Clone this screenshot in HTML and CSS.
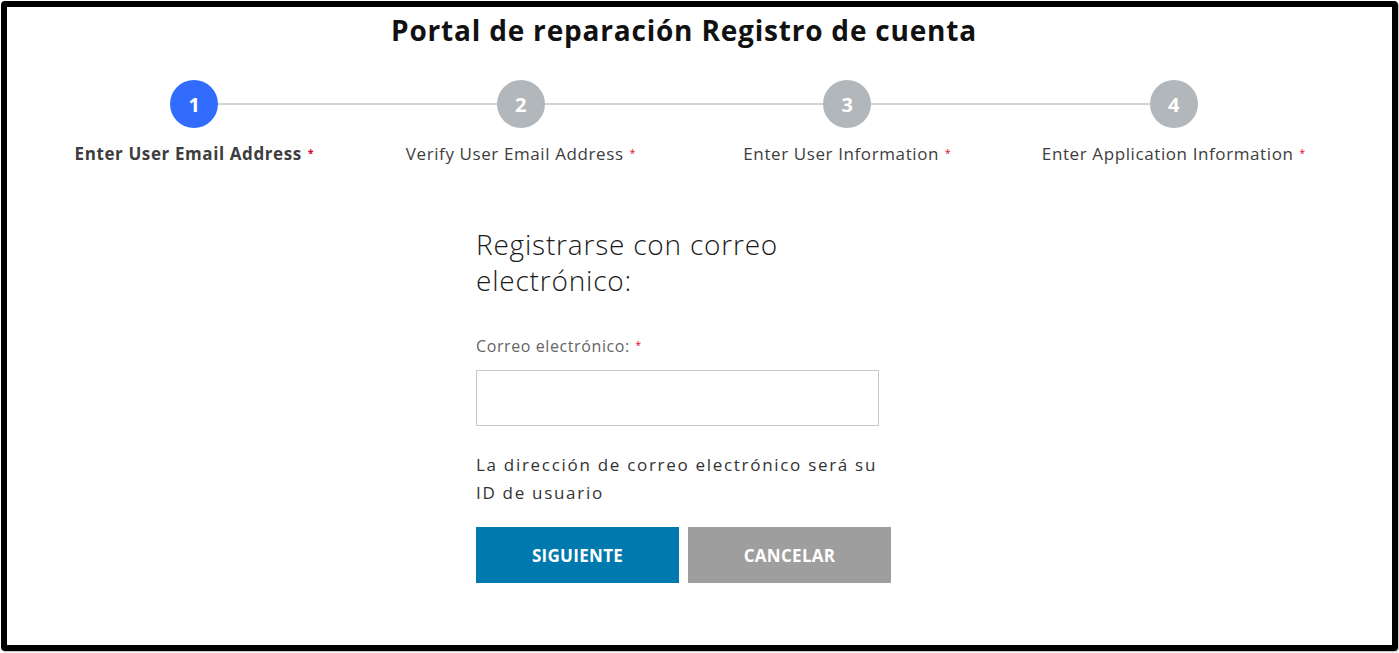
FILE: index.html
```html
<!DOCTYPE html>
<html lang="es">
<head>
    <meta charset="UTF-8">
    <meta name="viewport" content="width=device-width, initial-scale=1.0">
    <title>Portal de reparación Registro de cuenta</title>
    <link rel="stylesheet" href="styles.css">
</head>
<body>
    <div class="frame">
        <div class="page">
            <h1 class="page-title">Portal de reparación Registro de cuenta</h1>

            <ol class="steps">
                <li class="step active">
                    <span class="step-num">1</span>
                    <span class="step-label">Enter User Email Address <i class="req">*</i></span>
                </li>
                <li class="step">
                    <span class="step-num">2</span>
                    <span class="step-label">Verify User Email Address <i class="req">*</i></span>
                </li>
                <li class="step">
                    <span class="step-num">3</span>
                    <span class="step-label">Enter User Information <i class="req">*</i></span>
                </li>
                <li class="step">
                    <span class="step-num">4</span>
                    <span class="step-label">Enter Application Information <i class="req">*</i></span>
                </li>
            </ol>

            <form class="signup" onsubmit="return false">
                <h2 class="signup-title">Registrarse con correo electrónico:</h2>
                <label class="field-label" for="email">Correo electrónico: <i class="req">*</i></label>
                <input class="field-input" id="email" type="email">
                <p class="hint">La dirección de correo electrónico será su ID de usuario</p>
                <div class="actions">
                    <button class="btn btn-primary" type="submit">SIGUIENTE</button>
                    <button class="btn btn-secondary" type="button">CANCELAR</button>
                </div>
            </form>
        </div>
    </div>
</body>
</html>
```

FILE: styles.css
```css
html, body {
    margin: 0;
    height: 100%;
    background: #fff;
    font-family: 'Open Sans', 'Lato', sans-serif;
    color: #333;
}
.frame {
    box-sizing: border-box;
    margin: 1px;
    height: 650px;
    border: 6px solid #000;
    border-radius: 4px;
    box-shadow: 1px 1px 1px rgba(0, 0, 0, 0.25);
    overflow: hidden;
}
.page {
    padding: 0 55px 0 24px;
}
.page-title {
    margin: 6px 0 0;
    font-size: 28px;
    line-height: 34px;
    font-weight: 700;
    letter-spacing: 0.8px;
    text-align: center;
    color: #111;
}
.steps {
    list-style: none;
    margin: 33px 0 0;
    padding: 0;
    display: grid;
    grid-template-columns: repeat(4, 1fr);
    position: relative;
}
.steps::before {
    content: '';
    position: absolute;
    left: 12.5%;
    right: 12.5%;
    top: 23px;
    height: 2px;
    background: #d3d3d3;
}
.step {
    display: flex;
    flex-direction: column;
    align-items: center;
    position: relative;
}
.step-num {
    width: 48px;
    height: 48px;
    border-radius: 50%;
    background: #b1b7bb;
    color: #fff;
    font-weight: 700;
    font-size: 20px;
    display: flex;
    align-items: center;
    justify-content: center;
}
.step.active .step-num {
    background: #326cff;
}
.step-label {
    margin-top: 15px;
    font-size: 17px;
    line-height: 20px;
    letter-spacing: 0.6px;
    color: #3d3d3d;
    white-space: nowrap;
}
.step.active .step-label {
    font-weight: 700;
}
.req {
    font-style: normal;
    color: #e0001b;
    font-size: 10px;
    vertical-align: 3px;
    margin-left: 1px;
}
.signup {
    width: 416px;
    margin: 62px auto 0;
}
.signup-title {
    margin: 0;
    font-size: 28px;
    line-height: 36px;
    font-weight: 300;
    letter-spacing: 0.8px;
    color: #1a1a1a;
    width: 340px;
}
.field-label {
    display: block;
    margin-top: 37px;
    font-size: 16px;
    line-height: 20px;
    letter-spacing: 0.6px;
    color: #666;
}
.field-input {
    display: block;
    box-sizing: border-box;
    width: 403px;
    height: 56px;
    margin-top: 14px;
    border: 1px solid #c8c8c8;
    border-radius: 0;
    padding: 0 12px;
    font: inherit;
}
.hint {
    margin: 25px 0 0;
    width: 416px;
    font-size: 17px;
    line-height: 28px;
    letter-spacing: 1.7px;
    color: #333;
}
.actions {
    display: flex;
    gap: 9px;
    margin-top: 20px;
}
.btn {
    width: 203px;
    height: 56px;
    border: none;
    border-radius: 0;
    color: #fff;
    font-family: inherit;
    font-weight: 700;
    font-size: 17px;
    letter-spacing: 0.3px;
    cursor: pointer;
}
.btn-primary {
    background: #0079ae;
}
.btn-secondary {
    background: #9e9e9e;
}
```
